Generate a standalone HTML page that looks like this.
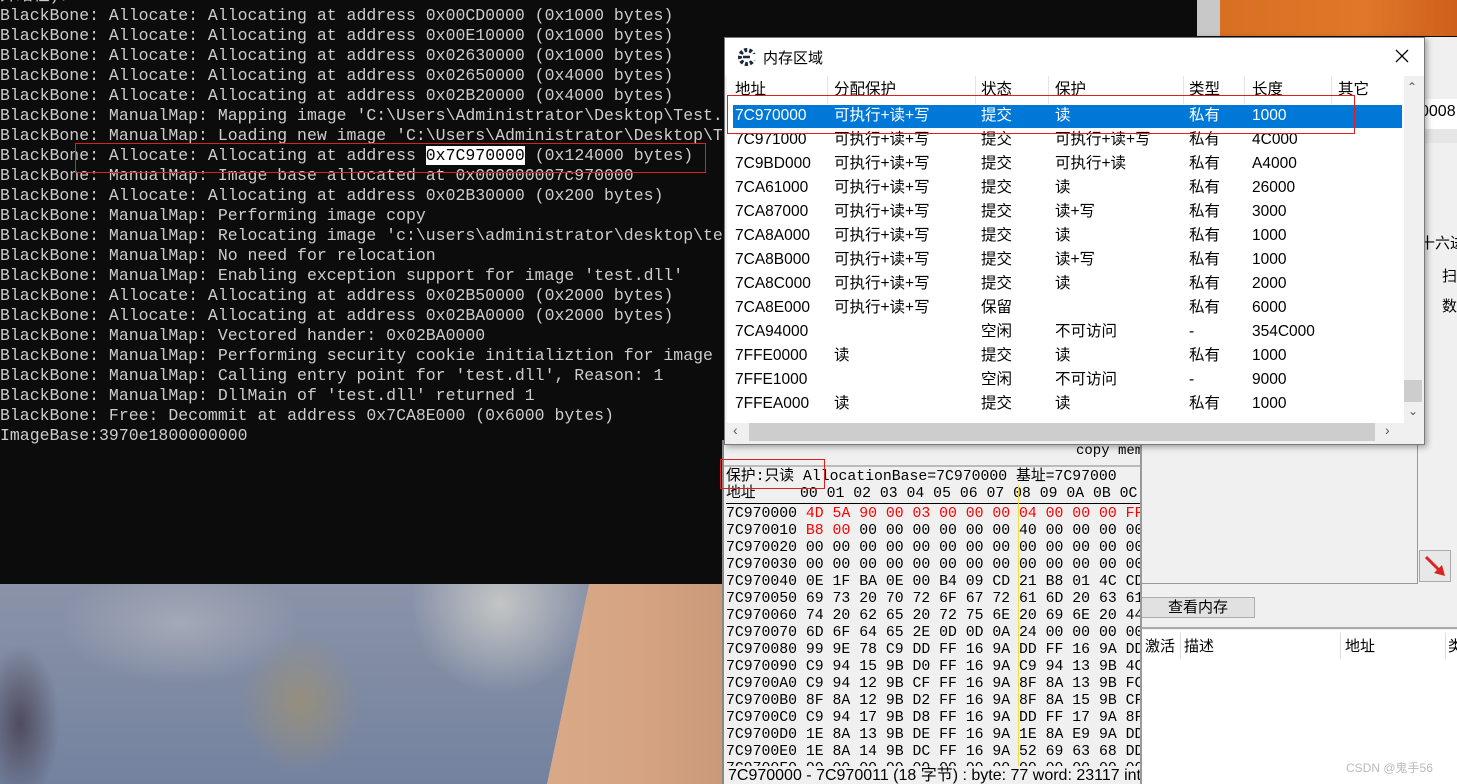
<!DOCTYPE html>
<html><head><meta charset="utf-8"><style>
*{margin:0;padding:0;box-sizing:border-box}
body{width:1457px;height:784px;overflow:hidden;background:#0c0c0c;position:relative;font-family:"Liberation Sans","Noto Sans CJK SC",sans-serif}
.abs{position:absolute}
#con{left:0;top:-14px;color:#cccccc;font:16.5px/20px "Liberation Mono","Noto Sans CJK SC",monospace;white-space:pre;width:722px;overflow:hidden}
#photo{left:0;top:584px;width:722px;height:200px;background:
radial-gradient(ellipse 60px 70px at 300px 120px,rgba(160,145,110,.7),transparent),
radial-gradient(ellipse 40px 80px at 20px 140px,rgba(60,50,65,.7),transparent),
radial-gradient(ellipse 90px 90px at 500px 20px,rgba(210,210,205,.8),transparent),
radial-gradient(ellipse 120px 60px at 180px 40px,rgba(185,185,195,.6),transparent),
linear-gradient(180deg,#8a93a8,#7d89a2 60%,#7482a0);overflow:hidden}
#skin{left:547px;top:0;width:180px;height:200px;background:linear-gradient(90deg,#d8a988,#d6a482 50%,#c89878);clip-path:polygon(42px 0,180px 0,180px 200px,0 200px)}
#mv{left:722px;top:440px;width:420px;height:344px;background:#f0f0f0;border-left:2px solid #888;overflow:hidden}
.hx{font:14.8px/17px "Liberation Mono",monospace;color:#000;white-space:pre;position:absolute;left:2px}
.r{color:#f00}
#rp{left:1140px;top:37px;width:317px;height:747px;background:#f0f0f0}
#rp div{white-space:nowrap}
#dlg{left:724px;top:37px;width:701px;height:408px;background:#f0f0f0;border:1px solid #7a7a7a;box-shadow:2px 2px 6px rgba(0,0,0,.35)}
.c{position:absolute;font-size:15.5px;line-height:24px;color:#000;white-space:pre}
</style></head><body>
<div id="con" class="abs">并结程)：
BlackBone: Allocate: Allocating at address 0x00CD0000 (0x1000 bytes)
BlackBone: Allocate: Allocating at address 0x00E10000 (0x1000 bytes)
BlackBone: Allocate: Allocating at address 0x02630000 (0x1000 bytes)
BlackBone: Allocate: Allocating at address 0x02650000 (0x4000 bytes)
BlackBone: Allocate: Allocating at address 0x02B20000 (0x4000 bytes)
BlackBone: ManualMap: Mapping image 'C:\Users\Administrator\Desktop\Test.dll'
BlackBone: ManualMap: Loading new image 'C:\Users\Administrator\Desktop\Test.dll'
BlackBone: Allocate: Allocating at address <span style="background:#fff;color:#000">0x7C970000</span> (0x124000 bytes)
BlackBone: ManualMap: Image base allocated at 0x000000007c970000
BlackBone: Allocate: Allocating at address 0x02B30000 (0x200 bytes)
BlackBone: ManualMap: Performing image copy
BlackBone: ManualMap: Relocating image 'c:\users\administrator\desktop\test.dll'
BlackBone: ManualMap: No need for relocation
BlackBone: ManualMap: Enabling exception support for image 'test.dll'
BlackBone: Allocate: Allocating at address 0x02B50000 (0x2000 bytes)
BlackBone: Allocate: Allocating at address 0x02BA0000 (0x2000 bytes)
BlackBone: ManualMap: Vectored hander: 0x02BA0000
BlackBone: ManualMap: Performing security cookie initializtion for image
BlackBone: ManualMap: Calling entry point for 'test.dll', Reason: 1
BlackBone: ManualMap: DllMain of 'test.dll' returned 1
BlackBone: Free: Decommit at address 0x7CA8E000 (0x6000 bytes)
ImageBase:3970e1800000000</div>
<div class="abs" style="left:75px;top:143px;width:631px;height:30px;border:1px solid #e02020"></div>
<div id="photo" class="abs"><div id="skin" class="abs"></div></div>
<div class="abs" style="left:1197px;top:0;width:23px;height:36px;background:#c8c8c8"></div>
<div class="abs" style="left:1220px;top:0;width:237px;height:36px;background:linear-gradient(90deg,#d86f22,#e0782a 60%,#cf5f1c)"></div>
<div id="rp" class="abs">
 <div class="abs" style="left:280px;top:40px;font-size:16px">)</div>
 <div class="abs" style="left:0;top:62px;width:317px;height:30px;background:#fff"></div>
 <div class="abs" style="left:280px;top:66px;font-size:16px">0008</div>
 <div class="abs" style="left:0;top:92px;width:317px;height:14px;background:#e6e6e6"></div>
 <div class="abs" style="left:280px;top:195px;font-size:15px">十六进</div>
 <div class="abs" style="left:302px;top:228px;font-size:15px">扫</div>
 <div class="abs" style="left:302px;top:258px;font-size:15px">数</div>
 <div class="abs" style="left:1px;top:405px;width:277px;height:142px;border:1px solid #999;border-top:none"></div>
 <div class="abs" style="left:279px;top:513px;width:32px;height:32px;border:1px solid #aaa;background:#e8e8e8">
  <svg width="30" height="30"><line x1="6" y1="6" x2="22" y2="22" stroke="#d22" stroke-width="3"/><polygon points="25,25 14,22 22,14" fill="#d22"/></svg></div>
 <div class="abs" style="left:1px;top:560px;width:114px;height:21px;border:1px solid #adadad;background:#e1e1e1;font-size:15px;text-align:center;line-height:19px">查看内存</div>
 <div class="abs" style="left:0;top:590px;width:317px;height:2px;background:#aaa"></div>
 <div class="abs" style="left:0;top:593px;width:317px;height:154px;background:#fff"></div>
 <div class="abs" style="left:5px;top:598px;font-size:15px">激活</div>
 <div class="abs" style="left:44px;top:598px;font-size:15px">描述</div>
 <div class="abs" style="left:205px;top:598px;font-size:15px">地址</div>
 <div class="abs" style="left:308px;top:598px;font-size:15px">类</div>
 <div class="abs" style="left:40px;top:596px;width:1px;height:26px;background:#ddd"></div>
 <div class="abs" style="left:200px;top:596px;width:1px;height:26px;background:#ddd"></div>
 <div class="abs" style="left:305px;top:596px;width:1px;height:26px;background:#ddd"></div>
 <div class="abs" style="left:206px;top:722px;font-size:12px;color:#bbb">CSDN @鬼手56</div>
</div>
<div id="mv" class="abs">
 <div class="hx" style="left:352px;top:3px;font-size:14px">copy mem</div>
 <div class="abs" style="left:0;top:25px;width:418px;height:2px;background:#bbb"></div>
 <div class="hx" style="top:29px">保护:只读 AllocationBase=7C970000 基址=7C97000</div>
 <div class="hx" style="top:46px">地址     00 01 02 03 04 05 06 07 08 09 0A 0B 0C</div>
 <div class="abs" style="left:2px;top:63px;width:416px;height:1px;background:#000"></div>
 <div class="abs" style="left:294px;top:45px;width:1px;height:300px;background:#f0e040"></div>
 <div class="hx" style="top:66px">7C970000 <span class="r">4D 5A 90 00 03 00 00 00 04 00 00 00 FF</span>
7C970010 <span class="r">B8 00</span> 00 00 00 00 00 00 40 00 00 00 00
7C970020 00 00 00 00 00 00 00 00 00 00 00 00 00
7C970030 00 00 00 00 00 00 00 00 00 00 00 00 00
7C970040 0E 1F BA 0E 00 B4 09 CD 21 B8 01 4C CD
7C970050 69 73 20 70 72 6F 67 72 61 6D 20 63 61
7C970060 74 20 62 65 20 72 75 6E 20 69 6E 20 44
7C970070 6D 6F 64 65 2E 0D 0D 0A 24 00 00 00 00
7C970080 99 9E 78 C9 DD FF 16 9A DD FF 16 9A DD
7C970090 C9 94 15 9B D0 FF 16 9A C9 94 13 9B 4C
7C9700A0 C9 94 12 9B CF FF 16 9A 8F 8A 13 9B FC
7C9700B0 8F 8A 12 9B D2 FF 16 9A 8F 8A 15 9B CF
7C9700C0 C9 94 17 9B D8 FF 16 9A DD FF 17 9A 8F
7C9700D0 1E 8A 13 9B DE FF 16 9A 1E 8A E9 9A DD
7C9700E0 1E 8A 14 9B DC FF 16 9A 52 69 63 68 DD
7C9700F0 00 00 00 00 00 00 00 00 00 00 00 00 00</div>
 <div class="abs" style="left:0;top:326px;width:418px;height:18px;background:#f0f0f0;font-size:16px;line-height:20px;white-space:pre;padding-left:4px">7C970000 - 7C970011 (18 字节) : byte: 77 word: 23117 int</div>
 <div class="abs" style="left:416px;top:0;width:2px;height:344px;background:#999"></div>
</div>
<div class="abs" style="left:720px;top:459px;width:105px;height:30px;border:1px solid #e02020"></div>
<div id="dlg" class="abs">
 <div class="abs" style="left:0;top:0;width:699px;height:38px;background:#fff"></div>
 <svg class="abs" style="left:12px;top:9px" width="20" height="20" viewBox="0 0 20 20"><circle cx="10" cy="10" r="7" fill="none" stroke="#1b2a3a" stroke-width="4" stroke-dasharray="3 2"/><rect x="12" y="7" width="8" height="6" fill="#fff"/><path d="M6 10h7" stroke="#1b2a3a" stroke-width="2.5"/></svg>
 <div class="abs" style="left:38px;top:9px;font-size:15px">内存区域</div>
 <svg class="abs" style="left:670px;top:11px" width="14" height="14"><path d="M1 1L13 13M13 1L1 13" stroke="#000" stroke-width="1.3"/></svg>
 <div class="abs" style="left:2px;top:38px;width:677px;height:347px;background:#fff;overflow:hidden">
  <div class="c" style="left:8px;top:2px">地址</div>
  <div class="c" style="left:107px;top:2px">分配保护</div>
  <div class="c" style="left:254px;top:2px">状态</div>
  <div class="c" style="left:328px;top:2px">保护</div>
  <div class="c" style="left:462px;top:2px">类型</div>
  <div class="c" style="left:525px;top:2px">长度</div>
  <div class="c" style="left:611px;top:2px">其它</div>
  <div class="abs" style="left:100px;top:0;width:1px;height:28px;background:#e5e5e5"></div>
  <div class="abs" style="left:248px;top:0;width:1px;height:28px;background:#e5e5e5"></div>
  <div class="abs" style="left:321px;top:0;width:1px;height:28px;background:#e5e5e5"></div>
  <div class="abs" style="left:456px;top:0;width:1px;height:28px;background:#e5e5e5"></div>
  <div class="abs" style="left:517px;top:0;width:1px;height:28px;background:#e5e5e5"></div>
  <div class="abs" style="left:604px;top:0;width:1px;height:28px;background:#e5e5e5"></div>
  <div class="abs" style="left:6px;top:29px;width:669px;height:23px;background:#0078d7"></div>
  <div class="c" style="left:8px;top:28px;color:#fff">7C970000</div><div class="c" style="left:107px;top:28px;color:#fff">可执行+读+写</div><div class="c" style="left:254px;top:28px;color:#fff">提交</div><div class="c" style="left:328px;top:28px;color:#fff">读</div><div class="c" style="left:462px;top:28px;color:#fff">私有</div><div class="c" style="left:525px;top:28px;color:#fff">1000</div>
  <div class="c" style="left:8px;top:52px">7C971000
7C9BD000
7CA61000
7CA87000
7CA8A000
7CA8B000
7CA8C000
7CA8E000
7CA94000
7FFE0000
7FFE1000
7FFEA000</div>
  <div class="c" style="left:107px;top:52px">可执行+读+写
可执行+读+写
可执行+读+写
可执行+读+写
可执行+读+写
可执行+读+写
可执行+读+写
可执行+读+写

读

读</div>
  <div class="c" style="left:254px;top:52px">提交
提交
提交
提交
提交
提交
提交
保留
空闲
提交
空闲
提交</div>
  <div class="c" style="left:328px;top:52px">可执行+读+写
可执行+读
读
读+写
读
读+写
读

不可访问
读
不可访问
读</div>
  <div class="c" style="left:462px;top:52px">私有
私有
私有
私有
私有
私有
私有
私有
-
私有
-
私有</div>
  <div class="c" style="left:525px;top:52px">4C000
A4000
26000
3000
1000
1000
2000
6000
354C000
1000
9000
1000</div>
 </div>
 <div class="abs" style="left:679px;top:38px;width:18px;height:347px;background:#f0f0f0"></div>
 <div class="abs" style="left:682px;top:42px;font-size:12px;color:#555">&#8963;</div>
 <div class="abs" style="left:679px;top:342px;width:18px;height:22px;background:#cdcdcd"></div>
 <div class="abs" style="left:683px;top:366px;font-size:12px;color:#555">&#8964;</div>
 <div class="abs" style="left:2px;top:385px;width:677px;height:18px;background:#f0f0f0"></div>
 <div class="abs" style="left:24px;top:385px;width:626px;height:18px;background:#cdcdcd"></div>
 <div class="abs" style="left:8px;top:384px;font-size:14px;color:#555">&lsaquo;</div>
 <div class="abs" style="left:660px;top:384px;font-size:14px;color:#555">&rsaquo;</div>
</div>
<div class="abs" style="left:727px;top:95px;width:628px;height:39px;border:1px solid #e02020"></div>
</body></html>
